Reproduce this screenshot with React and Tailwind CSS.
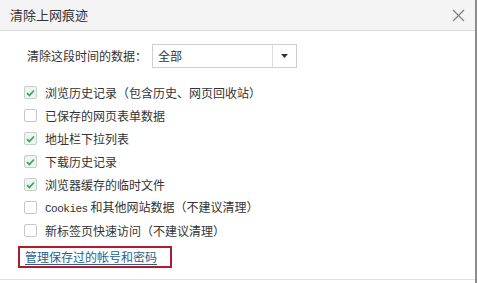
import React from "react";

const font = { fontFamily: '"Noto Sans CJK SC", "Noto Sans", sans-serif' };

function Box({ checked }) {
  return (
    <span
      className={
        "flex items-center justify-center w-[13px] h-[13px] rounded-[2px] border " +
        (checked ? "border-[#c4d0c8] bg-[#eef4f0]" : "border-[#c8c8c8] bg-white")
      }
    >
      {checked && (
        <svg width="9" height="8" viewBox="0 0 9 8">
          <path d="M1 4.2 L3.4 6.4 L8 1.5" fill="none" stroke="#3fa66a" strokeWidth="1.8" />
        </svg>
      )}
    </span>
  );
}

const rows = [
  { label: "浏览历史记录（包含历史、网页回收站）", checked: true },
  { label: "已保存的网页表单数据", checked: false },
  { label: "地址栏下拉列表", checked: true },
  { label: "下载历史记录", checked: true },
  { label: "浏览器缓存的临时文件", checked: true },
  { label: "cookies", checked: false },
  { label: "新标签页快速访问（不建议清理）", checked: false },
];

export default function App() {
  return (
    <div className="w-[478px] h-[283px] flex bg-white text-[#333] text-[12px] overflow-hidden" style={font}>
      <div className="w-[475px] flex flex-col">
        {/* title bar */}
        <div className="h-[31px] shrink-0 flex items-center justify-between pl-[10px] pr-[10px] bg-[#f4f4f4] border-b border-[#d9d9d9]">
          <span className="text-[13px] text-[#333]">清除上网痕迹</span>
          <svg width="13" height="13" viewBox="0 0 13 13">
            <path d="M1 1 L12 12 M12 1 L1 12" stroke="#808080" strokeWidth="1.2" />
          </svg>
        </div>

        {/* range select */}
        <div className="flex items-center mt-[13px] pl-[27px]">
          <span className="w-[125px]">清除这段时间的数据：</span>
          <div className="flex w-[145px] h-[24px] border border-[#cfcfcf] bg-white">
            <span className="flex-1 flex items-center pl-[5px]">全部</span>
            <span className="w-[24px] flex items-center justify-center border-l border-[#dcdcdc]">
              <svg width="7" height="4" viewBox="0 0 7 4">
                <path d="M0 0 L7 0 L3.5 4 Z" fill="#333" />
              </svg>
            </span>
          </div>
        </div>

        {/* options */}
        <div className="flex flex-col mt-[13px] pl-[24px]">
          {rows.map((r) => (
            <div key={r.label} className="h-[23px] flex items-center gap-[8px]">
              <Box checked={r.checked} />
              {r.label === "cookies" ? (
                <span>
                  <span className="text-[11px] tracking-[-0.5px]" style={{ fontFamily: '"Liberation Mono", monospace' }}>
                    Cookies
                  </span>{" "}
                  和其他网站数据（不建议清理）
                </span>
              ) : (
                <span>{r.label}</span>
              )}
            </div>
          ))}
        </div>

        {/* link */}
        <div className="mt-[4px] ml-[18px] w-[154px] h-[22px] flex items-center border-2 border-[#b01c2c] pl-[5px]">
          <span className="text-[#2b5f8e] underline underline-offset-2">管理保存过的帐号和密码</span>
        </div>

        <div className="mt-auto mb-[3px] h-px bg-[#e2e2e2]" />
      </div>
      <div className="w-[2px] bg-[#8c8c8c]" />
      <div className="w-[1px] bg-white" />
    </div>
  );
}
